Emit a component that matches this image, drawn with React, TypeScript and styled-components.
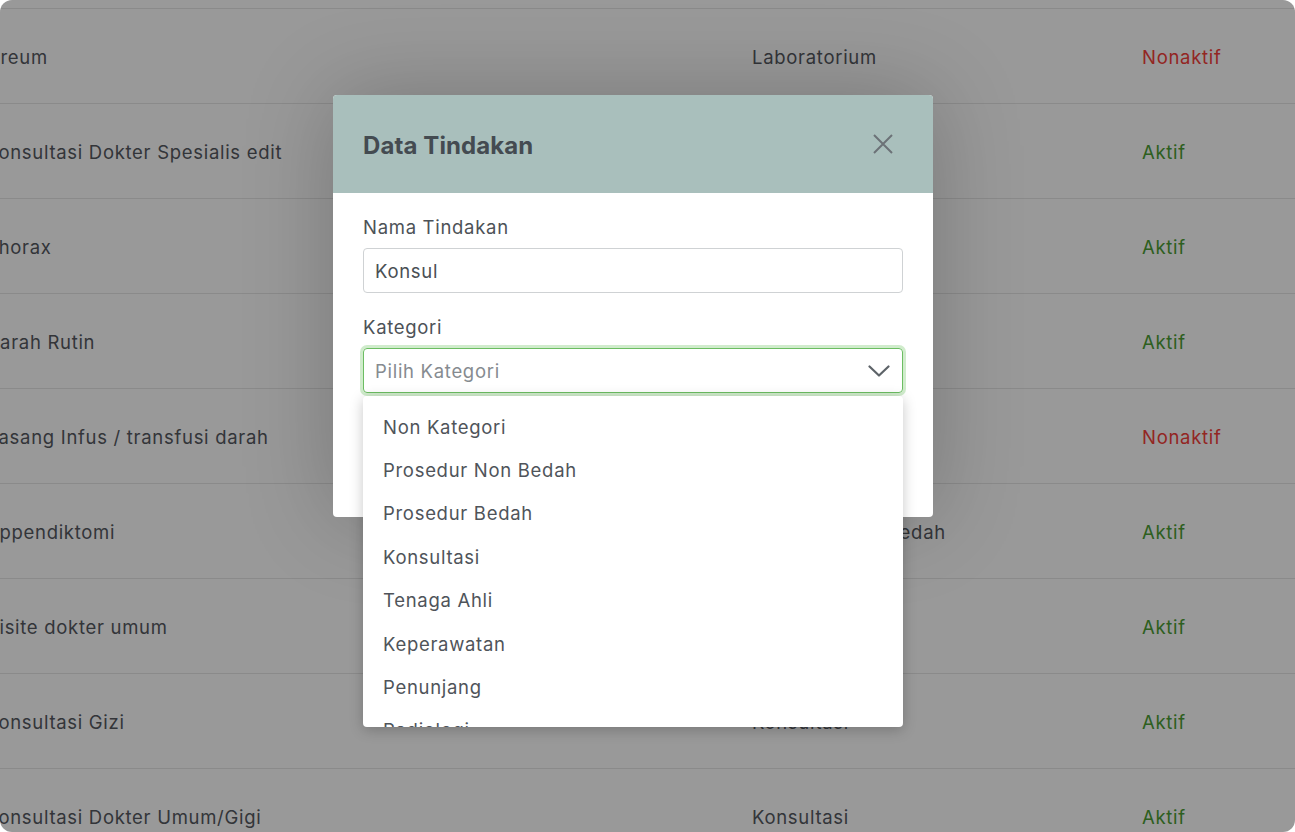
import React from "react";
import styled, { createGlobalStyle } from "styled-components";

const Global = createGlobalStyle`
  html, body { margin: 0; padding: 0; background: #ffffff; }
  body { font-family: Inter, "Noto Sans", "Liberation Sans", sans-serif; }
  * { box-sizing: border-box; }
`;

const Frame = styled.div`
  position: relative;
  width: 1295px;
  height: 832px;
  border-radius: 12px;
  overflow: hidden;
  background: #ffffff;
`;

const Table = styled.div`
  display: flex;
  flex-direction: column;
  padding-top: 8px;
  margin-left: -14px;
`;

const Row = styled.div`
  display: grid;
  grid-template-columns: 766px 390px 1fr;
  align-items: center;
  height: 95px;
  padding-top: 1px;
  border-top: 1px solid #e6e6e6;
  font-size: 18.5px;
  letter-spacing: 0.7px;
  color: #55595f;
`;

const Cell = styled.div`
  white-space: nowrap;
`;

const Status = styled.div<{ $active: boolean }>`
  color: ${(p) => (p.$active ? "#4c9e34" : "#f5403a")};
`;

const Backdrop = styled.div`
  position: absolute;
  inset: 0;
  background: rgba(0, 0, 0, 0.4);
  padding: 95px 0 0 333px;
`;

const Modal = styled.div`
  position: relative;
  width: 600px;
  border-radius: 4px;
  background: #ffffff;
  box-shadow: 0 0 90px rgba(0, 0, 0, 0.22);
`;

const Header = styled.div`
  display: flex;
  align-items: center;
  justify-content: space-between;
  height: 98px;
  padding: 2px 30px 0;
  background: #a9bfbc;
  border-radius: 4px 4px 0 0;
`;

const Title = styled.h2`
  margin: 0;
  font-size: 24px;
  letter-spacing: 0.1px;
  font-weight: 700;
  color: #444b51;
`;

const CloseButton = styled.button`
  display: flex;
  align-items: center;
  justify-content: center;
  width: 30px;
  height: 30px;
  margin: -2px 5px 0 0;
  padding: 0;
  border: none;
  background: transparent;
`;

const Body = styled.div`
  display: flex;
  flex-direction: column;
  padding: 21px 30px 124px;
`;

const Label = styled.label`
  display: block;
  font-size: 18.5px;
  letter-spacing: 0.7px;
  line-height: 26px;
  color: #4d5257;
  margin-bottom: 8px;
`;

const Field = styled.div`
  position: relative;
  & + & {
    margin-top: 21px;
  }
`;

const Input = styled.div`
  display: flex;
  align-items: center;
  height: 45px;
  padding: 1px 11px 0;
  border: 1px solid #cfd2d4;
  border-radius: 4px;
  font-size: 18.5px;
  letter-spacing: 0.7px;
  color: #4a4f54;
`;

const Select = styled.div`
  display: flex;
  align-items: center;
  justify-content: space-between;
  height: 45px;
  padding: 1px 12px 0 11px;
  border: 1.5px solid #6cbd62;
  border-radius: 4px;
  box-shadow: 0 0 0 3px rgba(120, 200, 110, 0.35);
  font-size: 18.5px;
  letter-spacing: 0.7px;
  color: #868b90;
`;

const Menu = styled.div`
  position: absolute;
  left: 0;
  right: 0;
  top: 82px;
  height: 331px;
  overflow: hidden;
  padding-top: 9px;
  background: #ffffff;
  border-radius: 4px;
  box-shadow: 0 3px 14px rgba(0, 0, 0, 0.22);
  z-index: 2;
`;

const Option = styled.div`
  display: flex;
  align-items: center;
  height: 43.4px;
  padding: 0 20px;
  font-size: 18.5px;
  letter-spacing: 0.7px;
  color: #4f545a;
`;

const rows: [string, string, boolean][] = [
  ["Ureum", "Laboratorium", false],
  ["Konsultasi Dokter Spesialis edit", "Konsultasi", true],
  ["Thorax", "Radiologi", true],
  ["Darah Rutin", "Laboratorium", true],
  ["Pasang Infus / transfusi darah", "Keperawatan", false],
  ["Appendiktomi", "Prosedur Non Bedah", true],
  ["Visite dokter umum", "Konsultasi", true],
  ["Konsultasi Gizi", "Konsultasi", true],
  ["Konsultasi Dokter Umum/Gigi", "Konsultasi", true],
];

const options = [
  "Non Kategori",
  "Prosedur Non Bedah",
  "Prosedur Bedah",
  "Konsultasi",
  "Tenaga Ahli",
  "Keperawatan",
  "Penunjang",
  "Radiologi",
  "Laboratorium",
];

export default function App() {
  return (
    <>
      <Global />
      <Frame>
        <Table>
          {rows.map(([name, cat, active]) => (
            <Row key={name}>
              <Cell>{name}</Cell>
              <Cell>{cat}</Cell>
              <Status $active={active}>{active ? "Aktif" : "Nonaktif"}</Status>
            </Row>
          ))}
        </Table>
        <Backdrop>
          <Modal>
            <Header>
              <Title>Data Tindakan</Title>
              <CloseButton aria-label="Tutup">
                <svg width="20" height="20" viewBox="0 0 20 20">
                  <path d="M1 1 L19 19 M19 1 L1 19" stroke="#6c7277" strokeWidth="2" fill="none" />
                </svg>
              </CloseButton>
            </Header>
            <Body>
              <Field>
                <Label>Nama Tindakan</Label>
                <Input>Konsul</Input>
              </Field>
              <Field>
                <Label>Kategori</Label>
                <Select>
                  <span>Pilih Kategori</span>
                  <svg width="22" height="12" viewBox="0 0 22 12">
                    <path d="M1.5 1.5 L11 10.5 L20.5 1.5" stroke="#5d6368" strokeWidth="2.2" fill="none" strokeLinecap="round" strokeLinejoin="round" />
                  </svg>
                </Select>
                <Menu>
                  {options.map((o) => (
                    <Option key={o}>{o}</Option>
                  ))}
                </Menu>
              </Field>
            </Body>
          </Modal>
        </Backdrop>
      </Frame>
    </>
  );
}
